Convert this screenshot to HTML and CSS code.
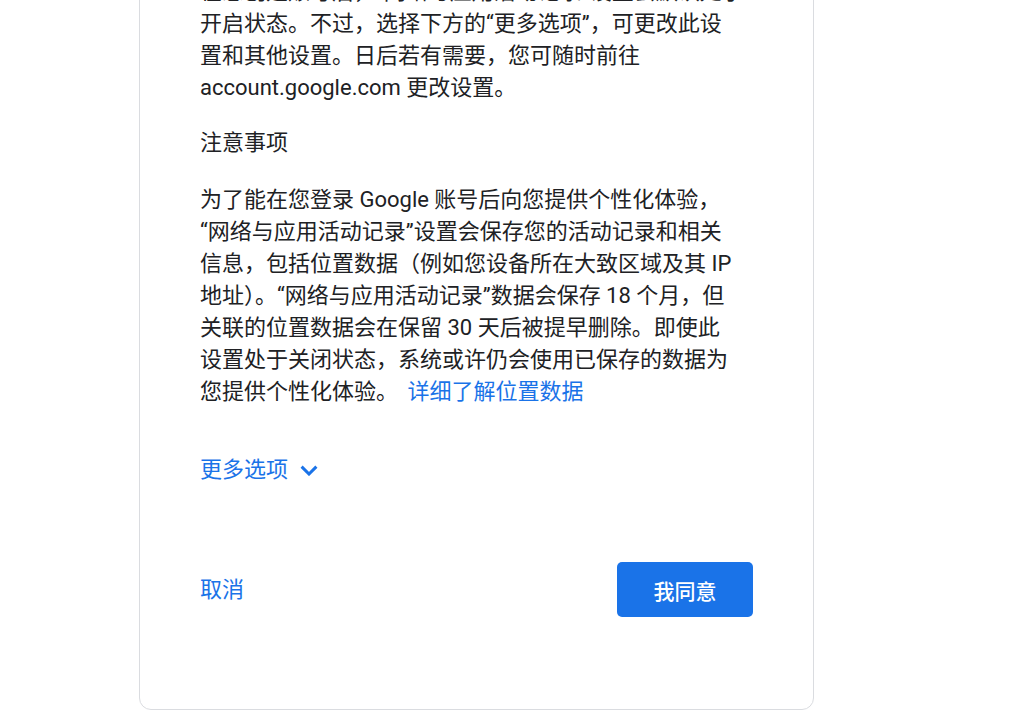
FILE: index.html
```html
<!DOCTYPE html>
<html lang="zh-CN">
<head>
<meta charset="utf-8">
<title>隐私权与条款</title>
<link rel="stylesheet" href="styles.css">
</head>
<body>
<main class="page">
  <section class="card">
    <p class="para">在您创建账号后，“网络与应用活动记录”设置会默认处于<br>开启状态。不过，选择下方的“更多选项”，可更改此设<br>置和其他设置。日后若有需要，您可随时前往<br>account.google.com 更改设置。</p>

    <h2 class="heading">注意事项</h2>

    <p class="para body">为了能在您登录 Google 账号后向您提供个性化体验，<br>“网络与应用活动记录”设置会保存您的活动记录和相关<br>信息，包括位置数据（例如您设备所在大致区域及其 IP<br>地址）。“网络与应用活动记录”数据会保存 18 个月，但<br>关联的位置数据会在保留 30 天后被提早删除。即使此<br>设置处于关闭状态，系统或许仍会使用已保存的数据为<br>您提供个性化体验。 <a class="link" href="#">详细了解位置数据</a></p>

    <button class="more" type="button">
      <span>更多选项</span>
      <svg class="chev" width="18" height="11" viewBox="0 0 18 11" aria-hidden="true"><polyline points="1.6,1.6 9,9 16.4,1.6" fill="none" stroke="currentColor" stroke-width="3" stroke-linecap="butt" stroke-linejoin="miter"/></svg>
    </button>

    <div class="actions">
      <button class="cancel" type="button">取消</button>
      <button class="agree" type="button">我同意</button>
    </div>
  </section>
</main>
</body>
</html>
```

FILE: styles.css
```css
html, body {
  margin: 0;
  padding: 0;
  background: #ffffff;
}

body {
  font-family: "Roboto", "Noto Sans CJK SC", sans-serif;
  color: #202124;
  overflow: hidden;
}

.page {
  padding-left: 139px;
  margin-top: -25px;
}

.card {
  width: 553px;
  border: 1px solid #dadce0;
  border-radius: 12px;
  padding: 0 60px 92px 60px;
  display: flex;
  flex-direction: column;
  align-items: flex-start;
}

.para {
  margin: 0;
  font-size: 22px;
  line-height: 32px;
  white-space: nowrap;
}

.heading {
  margin: 23px 0 0 0;
  font-size: 22px;
  line-height: 32px;
  font-weight: 400;
}

.body {
  margin-top: 25px;
}

.link {
  color: #1a73e8;
  text-decoration: none;
  margin-left: 4px;
}

.more {
  margin-top: 46px;
  padding: 0;
  border: 0;
  background: none;
  font: inherit;
  font-size: 22px;
  line-height: 32px;
  color: #1a73e8;
  display: flex;
  align-items: center;
  gap: 12px;
  cursor: pointer;
}

.chev {
  display: block;
  margin-top: 1px;
}

.actions {
  margin-top: 76px;
  align-self: stretch;
  display: flex;
  justify-content: space-between;
  align-items: center;
}

.cancel {
  padding: 0;
  border: 0;
  background: none;
  font: inherit;
  font-size: 22px;
  line-height: 32px;
  color: #1a73e8;
  cursor: pointer;
}

.agree {
  width: 136px;
  height: 55px;
  border: 0;
  border-radius: 5px;
  background: #1a73e8;
  color: #ffffff;
  font: inherit;
  font-size: 21px;
  font-weight: 500;
  cursor: pointer;
}
```
